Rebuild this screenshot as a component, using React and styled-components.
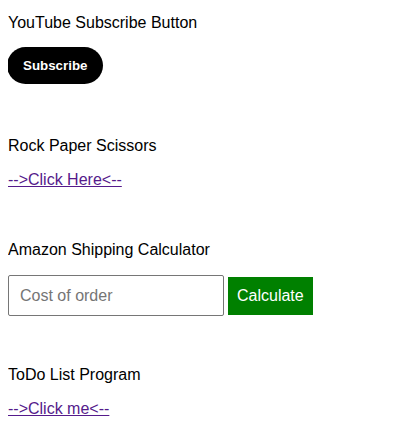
import React from "react";
import styled, { createGlobalStyle } from "styled-components";

const Global = createGlobalStyle`
  body {
    margin: 8px;
    font-family: "Liberation Sans", Arial, sans-serif;
    font-size: 16px;
    color: #000;
    background: #fff;
  }
`;

const Page = styled.div`
  display: flex;
  flex-direction: column;
  padding-top: 6px;
`;

const Section = styled.section`
  display: flex;
  flex-direction: column;
  align-items: flex-start;
  gap: ${(p) => p.$gap ?? 16}px;
  margin-bottom: ${(p) => p.$after ?? 52}px;
`;

const Title = styled.div`
  line-height: 18px;
  font-size: 16px;
`;

const SubscribeButton = styled.button`
  background: #000;
  color: #fff;
  border: none;
  border-radius: 19px;
  height: 37px;
  padding: 0 16px;
  font-family: "Liberation Sans", Arial, sans-serif;
  font-weight: bold;
  font-size: 13.33px;
  margin-left: -1px;
  cursor: pointer;
`;

const Link = styled.a`
  color: #551a8b;
  text-decoration: underline;
  line-height: 18px;
  font-size: 16px;
`;

const Row = styled.div`
  display: flex;
  align-items: center;
  gap: 4px;
`;

const Input = styled.input`
  box-sizing: border-box;
  width: 216px;
  height: 41px;
  border: 1px solid #767676;
  border-radius: 2px;
  padding: 0 11px;
  font-family: "Liberation Sans", Arial, sans-serif;
  font-size: 16px;
  &::placeholder {
    color: #757575;
  }
`;

const CalcButton = styled.button`
  background: #008000;
  color: #fff;
  border: none;
  height: 38px;
  padding: 0 9px;
  font-family: "Liberation Sans", Arial, sans-serif;
  font-size: 16px;
  cursor: pointer;
`;

export default function App() {
  return (
    <>
      <Global />
      <Page>
        <Section $gap={15} $after={53}>
          <Title>YouTube Subscribe Button</Title>
          <SubscribeButton>Subscribe</SubscribeButton>
        </Section>
        <Section>
          <Title>Rock Paper Scissors</Title>
          <Link href="#">--&gt;Click Here&lt;--</Link>
        </Section>
        <Section $after={50}>
          <Title>Amazon Shipping Calculator</Title>
          <Row>
            <Input placeholder="Cost of order" />
            <CalcButton>Calculate</CalcButton>
          </Row>
        </Section>
        <Section $after={0}>
          <Title>ToDo List Program</Title>
          <Link href="#">--&gt;Click me&lt;--</Link>
        </Section>
      </Page>
    </>
  );
}
